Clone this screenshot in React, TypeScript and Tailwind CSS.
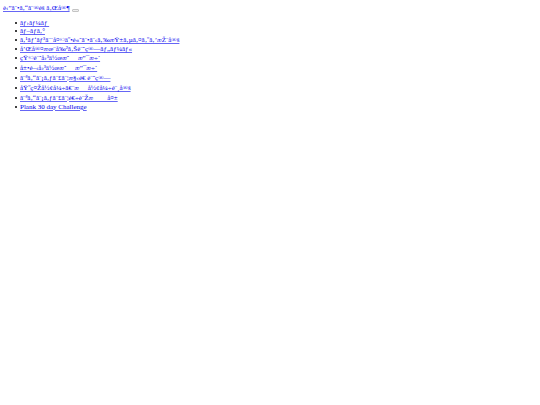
interface NavItem {
  label: string;
  tall?: boolean;
}

const items: NavItem[] = [
  { label: 'ãƒ›ãƒ¼ãƒ\u00a0' },
  { label: 'ãƒ–ãƒ\u00adã‚°' },
  { label: 'ã‚¹ãƒ‘ãƒ³ã¨¨å¤©äº•é«˜ã¨•ã¨‹ã‚‰æŸ±ã‚µã‚¤ã‚ºã‚’æŽ¨å®š', tall: true },
  { label: 'å’Œå®¤æœ¨å‰²ã‚Šè¨ˆç®—ãƒ„ãƒ¼ãƒ«' },
  { label: 'çŸ©è¨ˆå›³ä½œæˆ\u3000\u00a0æ”¯æ÷´', tall: true },
  { label: 'å±•é–‹å›³ä½œæˆ\u3000\u00a0æ”¯æ÷´', tall: true },
  { label: 'ã¨ªã‚“ã¨¡ã‚ƒã¨£ã¨¦æ§‹é€\u00a0è¨ˆç®—', tall: true },
  { label: 'åŸºç¤Žå½¢å¼÷ã€¨æ\u3000\u00a0å½¢å¼÷é¨¸å®š', tall: true },
  { label: 'ã¨ªã‚“ã¨¡ã‚ƒã¨£ã¨¦é€÷è¨Žæ\u3000\u3000å¤±', tall: true },
  { label: 'Plank 30 day Challenge' },
];

export default function App() {
  return (
    <main className="p-[3px] font-['Liberation_Serif',serif] text-[7px] leading-[8px] text-black">
      <nav>
        <div className="flex items-center gap-[2px] pt-px">
          <a href="#" className="text-[#0000ee] underline decoration-[#0000ee]/60">
            {'è‹”ã¨•ã‚“ã¨®éš\u00a0ã‚Œå®¶'}
          </a>
          <button
            type="button"
            aria-label="Toggle navigation"
            className="mt-[4px] h-[3px] w-[7px] rounded-[1px] border border-[#c4c4c4] bg-[#efefef]"
          />
        </div>
        <ul className="mt-[7px] pl-[12px]">
          {items.map(({ label, tall }) => (
            <li
              key={label}
              className={`flex items-center gap-[3px] before:size-[2px] before:rounded-full before:bg-black ${
                tall ? 'leading-[10px]' : 'leading-[8px]'
              }`}
            >
              <a href="#" className="text-[#0000ee] underline decoration-[#0000ee]/60">
                {label}
              </a>
            </li>
          ))}
        </ul>
      </nav>
    </main>
  );
}
